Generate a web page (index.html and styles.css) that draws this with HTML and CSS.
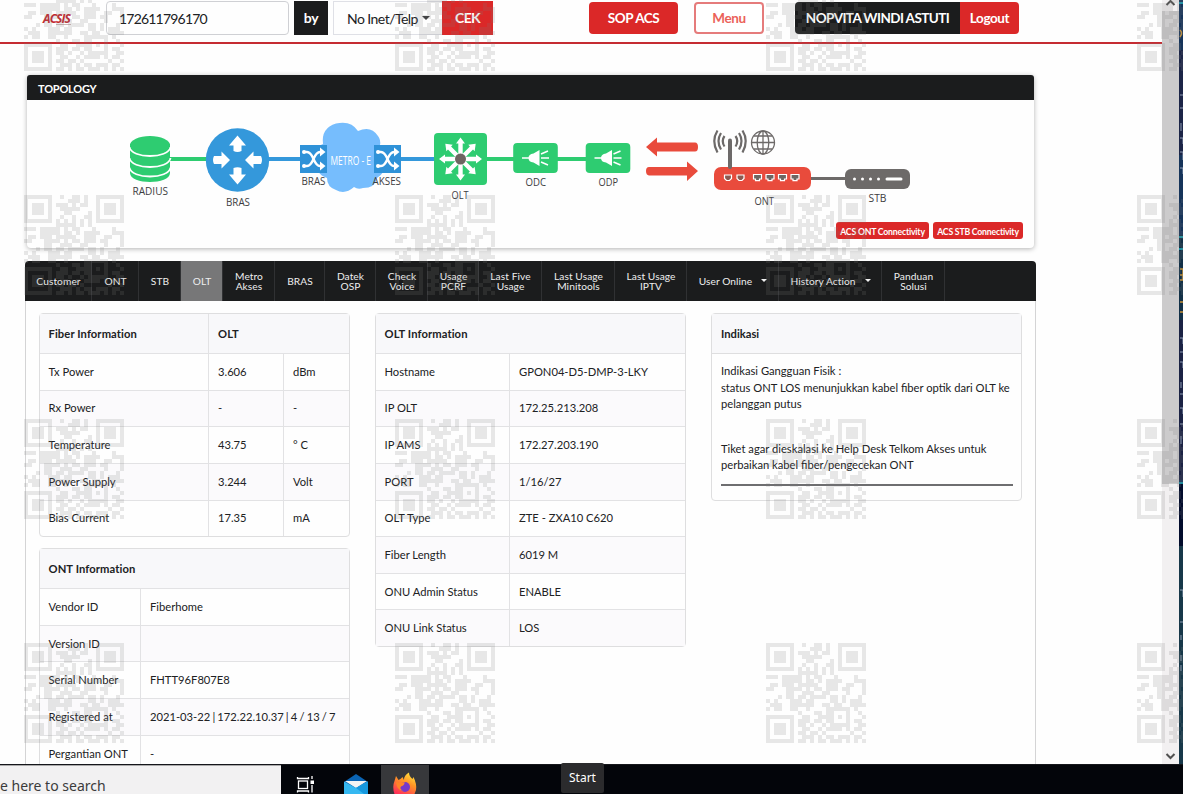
FILE: index.html
```html
<!DOCTYPE html>
<html lang="id">
<head>
<meta charset="utf-8">
<title>ACSIS</title>
<link rel="stylesheet" href="styles.css">
</head>
<body>
<div class="screen">
  <div class="browser">
    <main class="page">
      <header class="topbar">
        <div class="logo">ACSIS<span class="logo-sub"></span></div>
        <div class="search">172611796170</div>
        <div class="by">by</div>
        <div class="select"><span>No Inet/Telp</span><i class="caret"></i></div>
        <div class="btn cek">CEK</div>
        <div class="btn sop">SOP ACS</div>
        <div class="btn menu">Menu</div>
        <div class="btn user">NOPVITA WINDI ASTUTI</div>
        <div class="btn logout">Logout</div>
      </header>

      <section class="topology">
        <h2 class="topology-title">TOPOLOGY</h2>
        <svg class="diagram" viewBox="27 100 1007 147">
          <defs>
            <g id="shuffle">
              <rect x="-13.500" y="-14" width="27" height="28" fill="#2f92d8"/>
              <path d="M-10-7H-6.500Q-3-7 0 0T6.500 7H8M-10 7H-6.500Q-3 7 0 0T6.500-7H8" fill="none" stroke="#fff" stroke-width="2.400"/>
              <path d="M6.500-11.500 12-7 6.500-2.500ZM6.500 2.500 12 7 6.500 11.500Z" fill="#fff"/>
              <circle cx="-9.500" cy="-7" r="2" fill="#fff"/><circle cx="-9.500" cy="7" r="2" fill="#fff"/>
            </g>
            <path id="ray" d="M-2.200 0V-15.500H-4.500L0-21.500 4.500-15.500H2.200V0Z"/>
            <g id="splitter">
              <rect x="-22.300" y="-15" width="44.600" height="30" rx="4" fill="#2ecc71"/>
              <path d="M-13.500 0H-6M5.500-4 12.500-7M5.500 0H13.500M5.500 4 12.500 7" stroke="#fff" stroke-width="1.500" fill="none"/>
              <path d="M4-8V8L-2 4.500Q-7 4-7 0T-2-4.500Z" fill="#fff"/>
            </g>
            <path id="lan" d="M-4-3H4V1.500H2V3.200H-2V1.500H-4Z" fill="#6d6662" stroke="#fff" stroke-width="1.200"/>
            <path id="phone" d="M-3.500-2.500H3.500V1L1.500 3H-1.500L-3.500 1Z" fill="#8a5a52" stroke="#fff" stroke-width="1.200"/>
          </defs>
          <path d="M170 159H208M485 159H515M556 159H588" stroke="#2ecc71" stroke-width="4"/>
          <path d="M267 159H301M400 159H436" stroke="#3498db" stroke-width="4"/>
          <g fill="#2ecc71">
            <path d="M130 144V173C130 185 170 185 170 173V144Z"/>
            <ellipse cx="150" cy="145" rx="20" ry="9"/>
            <path d="M129.500 147C131 159 169 159 170.500 147M129.500 158C131 170 169 170 170.500 158M129.500 167.500C131 179.500 169 179.500 170.500 167.500" fill="none" stroke="#fff" stroke-width="1.800"/>
          </g>
          <circle cx="237.500" cy="160" r="31.700" fill="#3498db"/>
          <g fill="#fff">
            <path d="M237.500 135.500 246 145.500H241.500V151Q237.500 153 233.500 151V145.500H229Z"/>
            <path d="M237.500 184.500 246 174.500H241.500V168Q237.500 166.500 233.500 168V174.500H229Z"/>
            <path d="M230 160 221.500 151.500V156H214Q212 160 214 164H221.500V168.500Z"/>
            <path d="M245 160 253.500 151.500V156H261Q263 160 261 164H253.500V168.500Z"/>
          </g>
          <path d="M316 160Q311 149 323 144Q321 128 336 123.500Q351 120 358 131Q371 125 378 136Q381 140 380 145Q391 150 386 163Q385 173 377 178Q375 188 363 188Q358 190 354 187Q345 195 336 190Q327 187 327 178Q315 174 316 160Z" fill="#76bdfd"/>
          <use href="#shuffle" x="313.500" y="159"/>
          <use href="#shuffle" x="387.500" y="159"/>
          <rect x="434" y="133" width="53" height="52" rx="4" fill="#2ecc71"/>
          <g fill="#fff" transform="translate(460.500 159)">
            <use href="#ray"/><use href="#ray" transform="rotate(45)"/><use href="#ray" transform="rotate(90)"/><use href="#ray" transform="rotate(135)"/>
            <use href="#ray" transform="rotate(180)"/><use href="#ray" transform="rotate(225)"/><use href="#ray" transform="rotate(270)"/><use href="#ray" transform="rotate(315)"/>
            <circle r="5.500" fill="#6d6662"/>
          </g>
          <use href="#splitter" x="535.500" y="158"/>
          <use href="#splitter" x="608" y="158"/>
          <g fill="#e94b3c">
            <path d="M646 147 657 137.500V142.500H695Q698 142.500 698 147T695 151.500H657V156.500Z"/>
            <path d="M698 171 687 161.500V167H649Q646 167 646 171T649 175.500H687V181Z"/>
            <rect x="714" y="167" width="97" height="23" rx="7"/>
          </g>
          <g fill="none" stroke="#6d6a69">
            <path d="M811 178.500H846" stroke-width="2.800"/>
            <path d="M730 167V140.500" stroke-width="4" stroke-linecap="round"/>
            <path d="M724.500 136Q721 141 724.500 146.500M735.500 136Q739 141 735.500 146.500M721 133Q716 141 721 149.500M739 133Q744 141 739 149.500M717.500 130.500Q711 141 717.500 152.500M742.500 130.500Q749 141 742.500 152.500" stroke-width="2.200"/>
            <g stroke-width="1.300"><circle cx="763" cy="142.500" r="11.500"/><ellipse cx="763" cy="142.500" rx="5.800" ry="11.500"/><path d="M763 131V154M751.500 142.500H774.500M754 136H772M754 149H772"/></g>
          </g>
          <use href="#phone" x="728" y="177.500"/><use href="#phone" x="740.500" y="177.500"/>
          <use href="#lan" x="757.500" y="177.500"/><use href="#lan" x="770" y="177.500"/><use href="#lan" x="782.500" y="177.500"/><use href="#lan" x="795" y="177.500"/>
          <rect x="845" y="169" width="65" height="20" rx="6" fill="#6d6a69"/>
          <g fill="#fff"><circle cx="854.500" cy="179" r="1.500"/><circle cx="862.500" cy="179" r="1.500"/><circle cx="870.500" cy="179" r="1.500"/><circle cx="878.500" cy="179" r="1.500"/><rect x="885.500" y="177.500" width="17" height="3" rx="1.500"/></g>
          <g class="node-label">
            <text x="132.500" y="195" textLength="35.500" lengthAdjust="spacingAndGlyphs">RADIUS</text>
            <text x="226" y="205.500" textLength="24" lengthAdjust="spacingAndGlyphs">BRAS</text>
            <text x="301.500" y="185" textLength="24" lengthAdjust="spacingAndGlyphs">BRAS</text>
            <text x="372.500" y="185" textLength="28.500" lengthAdjust="spacingAndGlyphs">AKSES</text>
            <text x="330.500" y="164.500" textLength="40.500" lengthAdjust="spacingAndGlyphs" class="metro">METRO - E</text>
            <text x="451.500" y="198.500" textLength="17" lengthAdjust="spacingAndGlyphs">OLT</text>
            <text x="525.500" y="186" textLength="20.500" lengthAdjust="spacingAndGlyphs">ODC</text>
            <text x="598.500" y="186" textLength="19.500" lengthAdjust="spacingAndGlyphs">ODP</text>
            <text x="754.500" y="204.500" textLength="19.500" lengthAdjust="spacingAndGlyphs">ONT</text>
            <text x="868.500" y="202" textLength="18" lengthAdjust="spacingAndGlyphs">STB</text>
          </g>
        </svg>
        <div class="acs-buttons"><span class="mini ont">ACS ONT Connectivity</span><span class="mini">ACS STB Connectivity</span></div>
      </section>

      <nav class="tabs">
        <a class="w67">Customer</a><a class="w46">ONT</a><a class="w42">STB</a><a class="w42 active">OLT</a>
        <a class="w52">Metro<br>Akses</a><a class="w50">BRAS</a><a class="w51">Datek<br>OSP</a><a class="w52">Check<br>Voice</a>
        <a class="w51">Usage<br>PCRF</a><a class="w63">Last Five<br>Usage</a><a class="w73">Last Usage<br>Minitools</a><a class="w72">Last Usage<br>IPTV</a>
        <a class="w92">User Online<i class="caret light"></i></a><a class="w103">History Action<i class="caret light"></i></a><a class="w63">Panduan<br>Solusi</a>
      </nav>

      <section class="content">
        <div class="column">
          <table class="grid fiber">
            <colgroup><col class="fiber-name"><col class="fiber-value"><col></colgroup>
            <tr><th>Fiber Information</th><th colspan="2">OLT</th></tr>
            <tr><td>Tx Power</td><td>3.606</td><td>dBm</td></tr>
            <tr><td>Rx Power</td><td>-</td><td>-</td></tr>
            <tr><td>Temperature</td><td>43.75</td><td>° C</td></tr>
            <tr><td>Power Supply</td><td>3.244</td><td>Volt</td></tr>
            <tr><td>Bias Current</td><td>17.35</td><td>mA</td></tr>
          </table>
          <table class="grid ont-info">
            <colgroup><col class="ont-name"><col></colgroup>
            <tr><th colspan="2">ONT Information</th></tr>
            <tr><td>Vendor ID</td><td>Fiberhome</td></tr>
            <tr><td>Version ID</td><td></td></tr>
            <tr><td>Serial Number</td><td>FHTT96F807E8</td></tr>
            <tr><td>Registered at</td><td class="registered">2021-03-22 | 172.22.10.37 | 4 / 13 / 7</td></tr>
            <tr><td>Pergantian ONT</td><td>-</td></tr>
          </table>
        </div>
        <div class="column">
          <table class="grid olt-info">
            <colgroup><col class="olt-name"><col></colgroup>
            <tr><th colspan="2">OLT Information</th></tr>
            <tr><td>Hostname</td><td>GPON04-D5-DMP-3-LKY</td></tr>
            <tr><td>IP OLT</td><td>172.25.213.208</td></tr>
            <tr><td>IP AMS</td><td>172.27.203.190</td></tr>
            <tr><td>PORT</td><td>1/16/27</td></tr>
            <tr><td>OLT Type</td><td>ZTE - ZXA10 C620</td></tr>
            <tr><td>Fiber Length</td><td>6019 M</td></tr>
            <tr><td>ONU Admin Status</td><td>ENABLE</td></tr>
            <tr><td>ONU Link Status</td><td>LOS</td></tr>
          </table>
        </div>
        <div class="column">
          <div class="indikasi">
            <h3>Indikasi</h3>
            <div class="indikasi-body">
              <p>Indikasi Gangguan Fisik :<br>status ONT LOS menunjukkan kabel fiber optik dari OLT ke<br>pelanggan putus</p>
              <p class="ticket">Tiket agar dieskalasi ke Help Desk Telkom Akses untuk<br>perbaikan kabel fiber/pengecekan ONT</p>
            </div>
          </div>
        </div>
      </section>
    </main>
    <aside class="scrollbar">
      <svg class="chev" viewBox="0 0 17 11"><path d="M4.500 5 8.500 1 12.500 5" /></svg>
      <div class="thumb"></div>
      <svg class="chev down" viewBox="0 0 17 17"><path d="M4.500 7 8.500 11 12.500 7"/></svg>
    </aside>
    <svg class="backdrop" viewBox="0 0 4 765">
      <rect width="4" height="765" fill="#16345a"/><rect y="50" width="4" height="105" fill="#1c2547"/><rect y="235" width="4" height="85" fill="#123047"/><rect y="320" width="4" height="160" fill="#1b2244"/><rect y="482" width="4" height="64" fill="#020c2c"/><rect y="546" width="4" height="219" fill="#173849"/>
      <path d="M0 3H4M0 237H4M0 249H4M0 483H4" stroke="#1fb5c5" stroke-width="1.500"/>
      <path d="M1 30Q4 33 1 37M1 269H4V280H1M1 275H4M1 302H4M1 312H4" stroke="#c3913c" stroke-width="1.500" fill="none"/>
      <path d="M1 95H4M1 108H4M2 123V131M1 138H4V144M1 152H4V160M1 168H4V174M1 338H4V344M1 352H4M1 362H4V368M2 382V388M1 394H4M1 408H4V414M1 424H4M2 436V444M1 590H4V597M1 622H4M2 635V640M2 655V661M2 665V671" stroke="#8e9cb4" fill="none"/>
    </svg>
  </div>
  <footer class="taskbar">
    <div class="task-search">e here to search</div>
    <svg class="task-icon" viewBox="281 765 48 29"><g fill="none" stroke="#fff" stroke-width="1.300"><rect x="298.500" y="781" width="9" height="7.500"/><path d="M297.500 777V778.500H308.500V777M297.500 792.500V791H308.500V792.500M312 776V779M312 785V792.500"/></g><rect x="310.500" y="780.500" width="3.500" height="3.500" fill="#fff"/></svg>
    <svg class="task-icon mail" viewBox="332 765 48 29"><path d="M344 782 356 774 368 782V794H344Z" fill="#0a64b4"/><path d="M345 781H367L356 788Z" fill="#f4f4f4"/><path d="M344 781.500 356 788 368 781.500V794H344Z" fill="#35b8f1"/><path d="M368 781.500V794H364L356 788Z" fill="#1698de"/></svg>
    <svg class="task-icon firefox" viewBox="381 765 48 29">
      <defs><linearGradient id="flame" x1=".8" y1="0" x2=".25" y2="1"><stop offset="0" stop-color="#ffe640"/><stop offset=".45" stop-color="#ff9325"/><stop offset="1" stop-color="#ff3258"/></linearGradient></defs>
      <path d="M394.500 794Q392 787 394.500 781L396 776 398.500 780Q401 779 402.500 777L404 780Q404 775 409 772.500Q409 776 412.500 779L413.500 777Q417 784 416 790L414.500 794Z" fill="url(#flame)"/>
      <circle cx="405" cy="787" r="5" fill="#7539c8"/><path d="M396 782Q401 783.500 404.500 782Q405 785 401 786.500Q399 789 403 790.500Q397 791 396 782Z" fill="#ff8528"/>
    </svg>
    <div class="tooltip">Start</div>
  </footer>
  <svg class="watermark" id="watermark" viewBox="0 0 1183 794"></svg>
</div>
<script src="script.js"></script>
</body>
</html>
```
FILE: styles.css
```css
* { box-sizing: border-box; }
body { margin: 0; background: #fff; font-family: Lato, "Liberation Sans", sans-serif; color: #202123; }
.screen { position: relative; width: 1183px; height: 794px; overflow: hidden; }
.browser { display: flex; height: 764px; overflow: hidden; }
.page { width: 1162px; height: 764px; overflow: hidden; background: #fefefe; }
.scrollbar { width: 17px; display: flex; flex-direction: column; background: #f2f0f1; }
.thumb { height: 473px; background: #cccbcc; }
.chev { width: 17px; height: 11px; fill: none; stroke: #505050; stroke-width: 2; background: #f2f0f1; }
.chev.down { height: 17px; margin-top: auto; }
.backdrop { width: 4px; height: 765px; }

.topbar { display: flex; align-items: flex-start; height: 44px; padding-top: 1px; border-bottom: 2px solid #c52c32; }
.logo { width: 63px; margin-left: 43px; padding-top: 10px; font: italic 700 12px/15px "Open Sans", sans-serif; letter-spacing: -.9px; color: #c4272d; }
.logo-sub { display: block; width: 15px; height: 1px; margin: -2px 0 0 13px; background: #ccb5b5; }
.search { width: 183px; height: 34px; padding-left: 12px; border: 1px solid #cfd0d4; border-radius: 4px; font-size: 14px; line-height: 33px; letter-spacing: -.8px; }
.by { width: 34px; height: 34px; margin: 0 5px; background: #1b1c1d; color: #fff; font-size: 14px; font-weight: 700; line-height: 33px; text-align: center; letter-spacing: -.4px; }
.select { display: flex; align-items: center; justify-content: space-between; width: 109px; height: 34px; padding: 0 12px 0 13px; border: 1px solid #dfe0e6; border-right: 0; font-size: 14px; letter-spacing: -.55px; white-space: nowrap; }
.caret { border: 4px solid transparent; border-top-color: #36373a; border-bottom: 0; }
.caret.light { border-width: 3px; border-bottom: 0; border-top-color: #f2f2f2; margin-left: 9px; }
.btn { height: 32px; margin-top: 1px; border-radius: 4px; background: #db2828; color: #fff; font-size: 13.500px; font-weight: 700; line-height: 33px; text-align: center; letter-spacing: -.4px; white-space: nowrap; }
.cek { width: 51px; height: 34px; margin-top: 0; border-radius: 0; font-size: 14px; line-height: 34px; letter-spacing: -.7px; }
.sop { width: 89px; margin-left: 96px; }
.menu { width: 70px; margin-left: 16px; border: 2px solid #e57b7b; background: #fff; color: #eb6259; line-height: 29px; }
.user { width: 165px; margin-left: 31px; border-radius: 4px 0 0 4px; background: #1b1c1d; letter-spacing: -.58px; }
.logout { width: 59px; border-radius: 0 4px 4px 0; }

.topology { width: 1007px; height: 173px; margin: 31px 0 0 27px; border-radius: 4px; background: #fefefe; box-shadow: 0 1px 5px rgba(0,0,0,.3); }
.topology-title { height: 25px; margin: 0; padding-left: 11px; border-radius: 3px 3px 0 0; background: #1b1c1d; color: #fff; font-size: 11px; line-height: 28px; letter-spacing: -.2px; }
.diagram { display: block; width: 1007px; height: 147px; }
.node-label { font: 11.500px "Open Sans", sans-serif; fill: #3d3d3f; }
.metro { fill: #fff; font-size: 12px; }
.acs-buttons { display: flex; justify-content: flex-end; gap: 4px; height: 17px; margin: -25px 11px 0 0; }
.mini { width: 90px; border-radius: 3px; background: #db2828; color: #fff; font-size: 8.700px; font-weight: 700; line-height: 19px; text-align: center; white-space: nowrap; letter-spacing: -.2px; }
.mini.ont { width: 93px; }

.tabs { display: flex; width: 1011px; height: 40px; margin: 13px 0 0 25px; border-radius: 4px 4px 0 0; background: #1b1c1d; }
.tabs a { display: flex; align-items: center; justify-content: center; height: 40px; border-right: 1px solid #303133; color: #eee; font-size: 10.200px; line-height: 10px; text-align: center; white-space: nowrap; padding: 0 0 1px 1px; letter-spacing: .08px; }
.tabs .active { background: #777778; }
.w42 { width: 42px; } .w46 { width: 47px; } .w50 { width: 50px; } .w51 { width: 51px; } .w52 { width: 52px; } .w63 { width: 63px; }
.w67 { width: 67px; } .w72 { width: 72px; } .w73 { width: 73px; } .w92 { width: 92px; } .w103 { width: 103px; }

.content { display: flex; gap: 25px; width: 1011px; height: 470px; margin-left: 25px; padding: 12px 13px 0; border: solid #d4d4d5; border-width: 0 1px; }
.column { width: 311px; flex: none; }
.grid { width: 311px; table-layout: fixed; border-collapse: separate; border-spacing: 0; border: 1px solid #dededf; border-radius: 4px; margin-bottom: 11px; font-size: 11.200px; }
.grid th, .grid td { padding: 0 0 1px 9px; text-align: left; white-space: nowrap; border-left: 1px solid #e2e2e4; }
.grid th:first-child, .grid td:first-child { border-left: 0; padding-left: 8.500px; }
.grid th { height: 39px; padding-bottom: 0; background: #f8f8fa; letter-spacing: .1px; }
.grid td { height: 36.650px; border-top: 1px solid #e2e2e4; }
.grid tr:nth-child(odd) td { background: #fbfafc; }
.fiber-name { width: 168px; } .fiber-value { width: 75px; }
.ont-name { width: 100px; } .olt-name { width: 133px; }
.grid .registered { word-spacing: -.7px; }
.indikasi { height: 188px; border: 1px solid #dededf; border-radius: 4px; font-size: 11.200px; line-height: 16.500px; }
.indikasi h3 { height: 40px; margin: 0; padding-left: 9px; border-bottom: 1px solid #dededf; background: #f8f8fa; font-size: 11.200px; line-height: 40px; }
.indikasi-body { padding: 9px 8px 0 9px; white-space: nowrap; }
.indikasi p { margin: 0; }
.indikasi .ticket { margin-top: 28px; padding-bottom: 10px; border-bottom: 2px solid #6e6e70; }

.taskbar { display: flex; height: 30px; background: #03050a; border-top: 1px solid #15161b; }
.task-search { width: 281px; border-top: 1px solid #aaa; background: #f2f1f2; color: #3b3b3b; font: 14px/40px "Noto Sans", sans-serif; }
.task-icon { width: 48px; height: 29px; }
.mail { margin-left: 3px; }
.firefox { margin-left: 1px; background: #37383b; }
.tooltip { position: relative; top: -2px; width: 43px; height: 30px; margin-left: 132px; border-radius: 2px; background: #2b2b2d; color: #fff; font: 12px/30px "Noto Sans", sans-serif; text-align: center; }
.watermark { position: absolute; inset: 0; width: 1183px; height: 794px; pointer-events: none; fill: rgba(124,124,124,.176); }
```
FILE: script.js
```javascript
// QR watermark, 25 x 25 modules of 4px, tiled over the page.
const modules = [
  "1111111001001101001111111",
  "1000001000011101001000001",
  "1011101011101011001011101",
  "1011101001111100001011101",
  "1011101000110000101011101",
  "1000001001001001101000001",
  "1111111010101010101111111",
  "0000000011111010100000000",
  "1110111110101100010000100",
  "0000111110110101111000111",
  "0110111011111001110011001",
  "1100011110101101110110001",
  "0000011001110011000010001",
  "0001011011011110110100010",
  "1010001110110000110101110",
  "0111001111110011011001111",
  "1011001100100001111110100",
  "0000000010001101100010010",
  "1111111001100111101010001",
  "1000001011101101100010110",
  "1011101011010010111110011",
  "1011101001100101111010110",
  "1011101011011010000001001",
  "1000001001110101101110110",
  "1111111011010110111010101"
];
let d = "";
modules.forEach((row, y) => {
  for (const run of row.matchAll(/1+/g)) d += `M${run.index * 4} ${y * 4}h${run[0].length * 4}v4h-${run[0].length * 4}z`;
});
const layer = document.getElementById("watermark");
for (const y of [-29, 195, 419, 643]) {
  for (const x of [24, 395, 766, 1137]) {
    const path = document.createElementNS("http://www.w3.org/2000/svg", "path");
    path.setAttribute("d", d);
    path.setAttribute("transform", `translate(${x} ${y})`);
    layer.append(path);
  }
}
```
